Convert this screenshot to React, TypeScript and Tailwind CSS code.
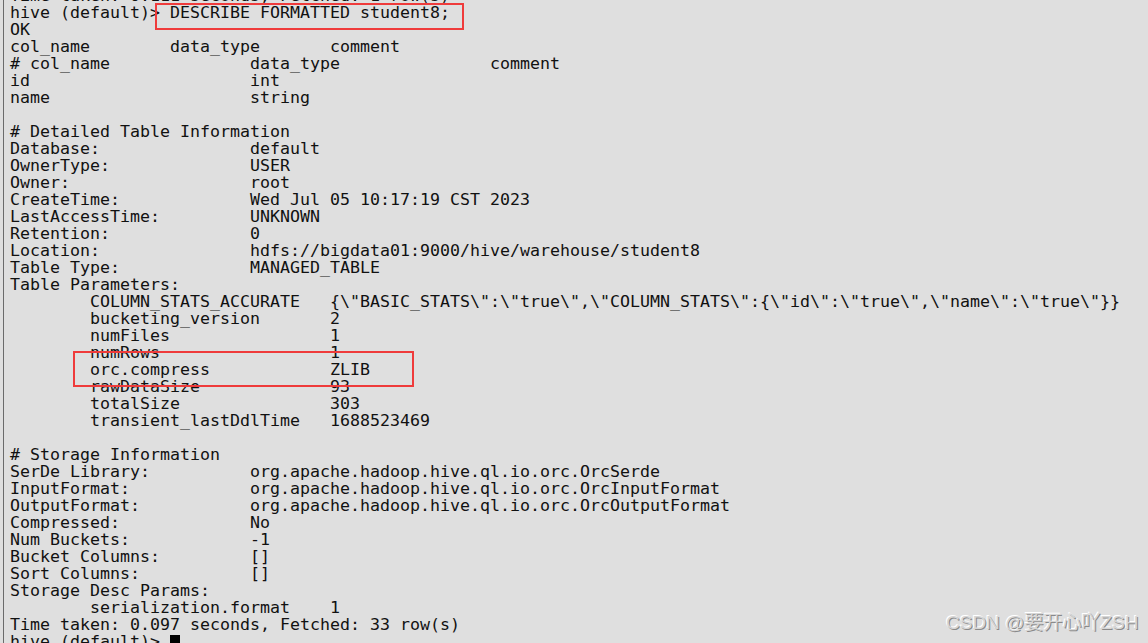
const lines: string[] = [
  'Time taken: 0.111 seconds, Fetched: 1 row(s)',
  'hive (default)> DESCRIBE FORMATTED student8;',
  'OK',
  'col_name        data_type       comment',
  '# col_name              data_type               comment',
  'id                      int',
  'name                    string',
  '',
  '# Detailed Table Information',
  'Database:               default',
  'OwnerType:              USER',
  'Owner:                  root',
  'CreateTime:             Wed Jul 05 10:17:19 CST 2023',
  'LastAccessTime:         UNKNOWN',
  'Retention:              0',
  'Location:               hdfs://bigdata01:9000/hive/warehouse/student8',
  'Table Type:             MANAGED_TABLE',
  'Table Parameters:',
  '        COLUMN_STATS_ACCURATE   {\\"BASIC_STATS\\":\\"true\\",\\"COLUMN_STATS\\":{\\"id\\":\\"true\\",\\"name\\":\\"true\\"}}',
  '        bucketing_version       2',
  '        numFiles                1',
  '        numRows                 1',
  '        orc.compress            ZLIB',
  '        rawDataSize             93',
  '        totalSize               303',
  '        transient_lastDdlTime   1688523469',
  '',
  '# Storage Information',
  'SerDe Library:          org.apache.hadoop.hive.ql.io.orc.OrcSerde',
  'InputFormat:            org.apache.hadoop.hive.ql.io.orc.OrcInputFormat',
  'OutputFormat:           org.apache.hadoop.hive.ql.io.orc.OrcOutputFormat',
  'Compressed:             No',
  'Num Buckets:            -1',
  'Bucket Columns:         []',
  'Sort Columns:           []',
  'Storage Desc Params:',
  '        serialization.format    1',
  'Time taken: 0.097 seconds, Fetched: 33 row(s)',
]

export default function App() {
  return (
    <div className="relative w-[1148px] h-[643px] overflow-hidden bg-[#dfdfdf] flex">
      <div className="w-px ml-[3px] shrink-0 bg-[#6b6b6b]" />
      <div className="pl-[6px] mt-[-13px] text-[16.61px] leading-[17px] text-[#111] whitespace-pre font-['DejaVu_Sans_Mono',monospace]">
        {lines.map((l, i) => (
          <div key={i} className="h-[17px]">{l}</div>
        ))}
        <div className="h-[17px] flex items-center">
          <span>hive (default)&gt; </span>
          <span className="inline-block w-[10px] h-[15px] bg-black mt-[2px]" />
        </div>
      </div>

      {/* highlight boxes */}
      <div className="absolute left-[155px] top-[3px] w-[309px] h-[27px] border-2 border-[#ef3b3b]" />
      <div className="absolute left-[73px] top-[351px] w-[341px] h-[36px] border-2 border-[#ef3b3b]" />

      {/* watermark */}
      <div className="absolute left-[946px] top-[611px] text-[19px] leading-[24px] text-[#d6d6d6] font-['Liberation_Sans','Noto_Sans_CJK_SC',sans-serif] [text-shadow:1px_1px_0_#8a8a8a,-1px_-1px_0_#ffffff]">
        CSDN @要开心吖ZSH
      </div>
    </div>
  )
}
